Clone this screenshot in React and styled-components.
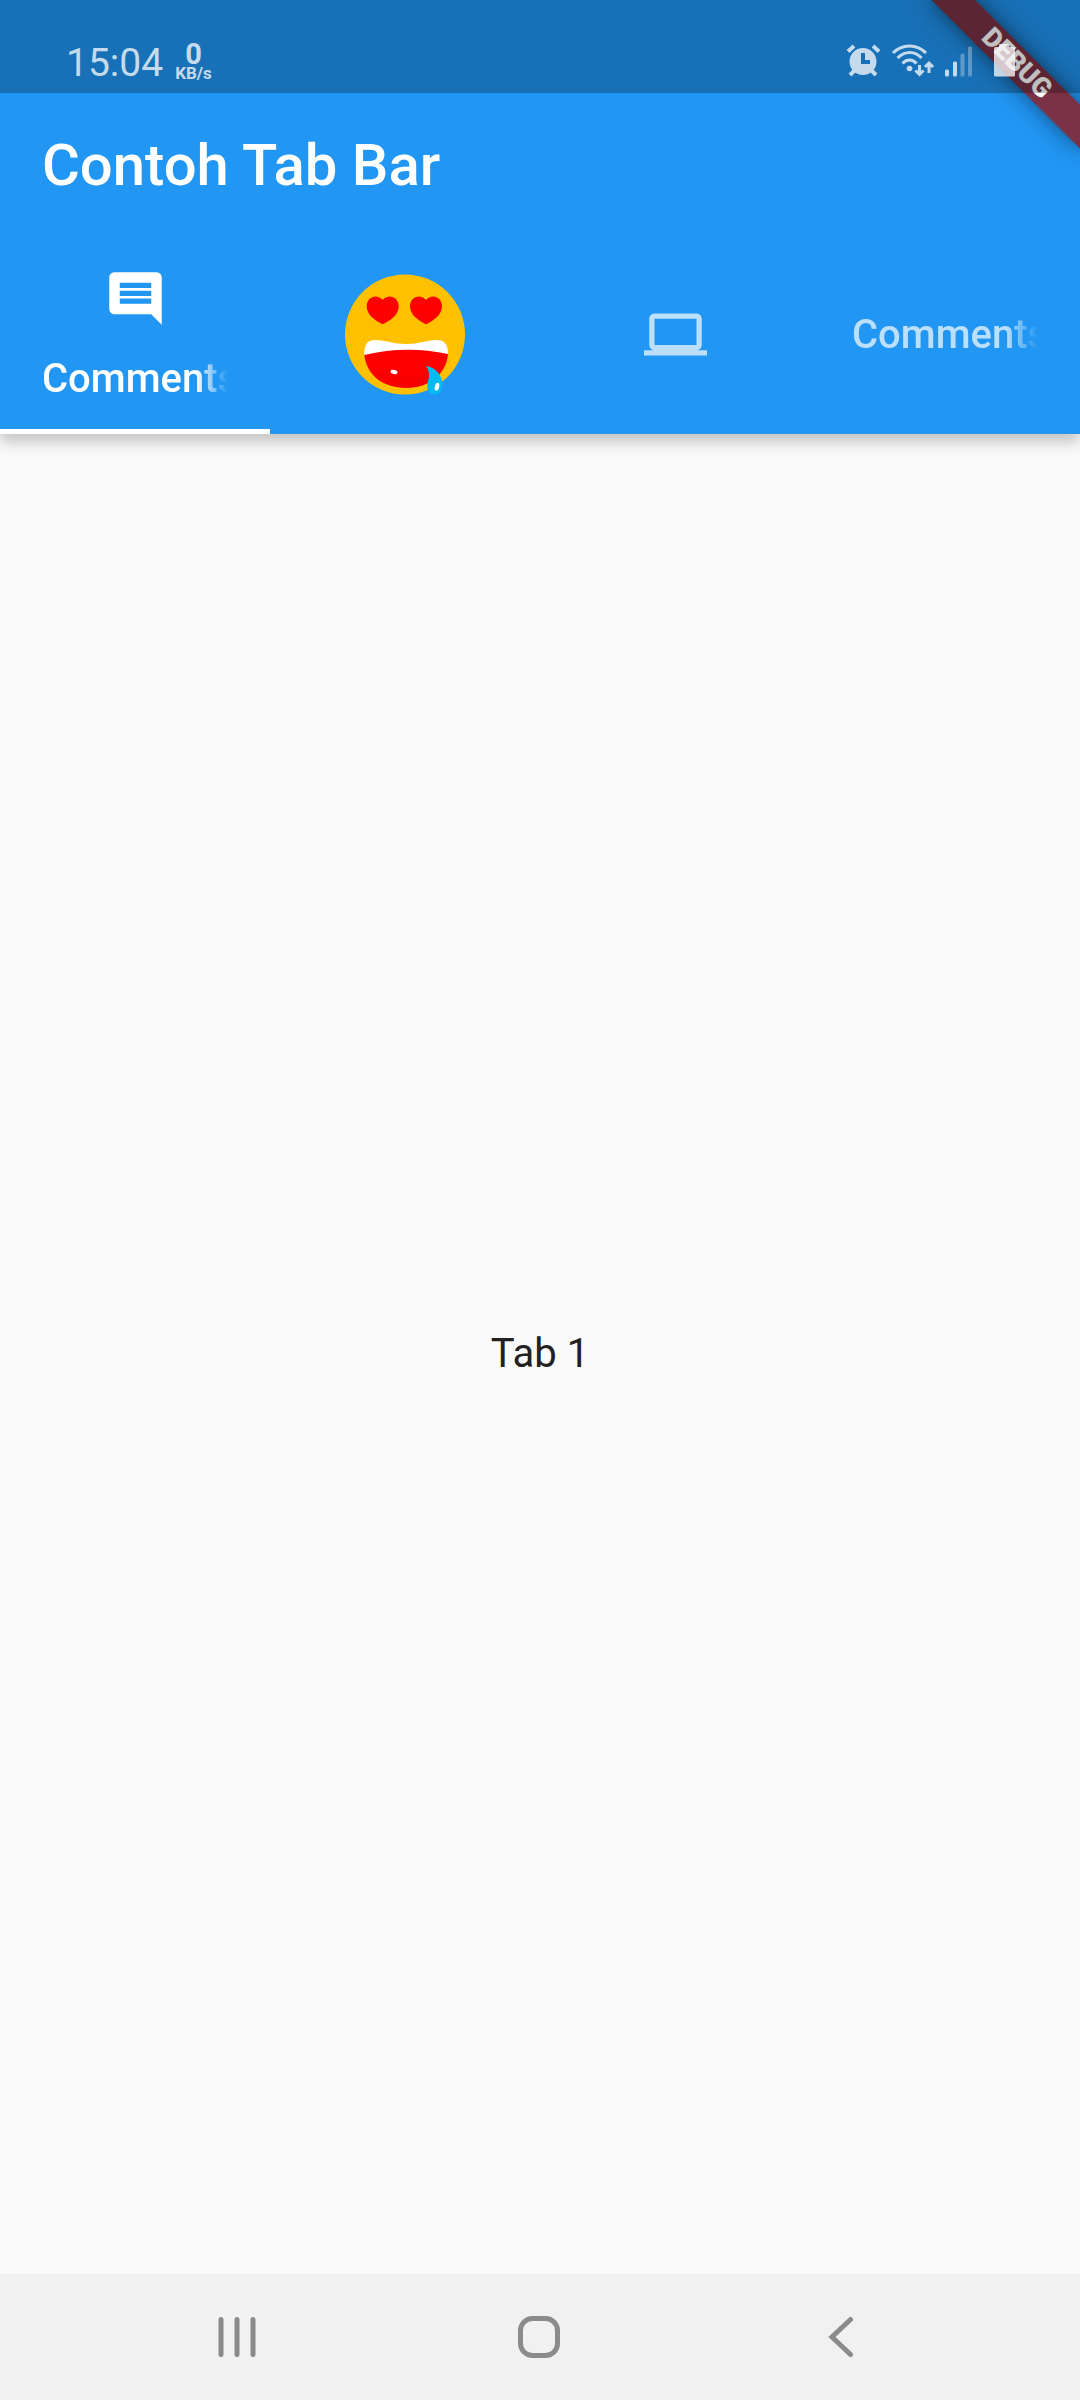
import React, { useState } from "react";
import styled, { createGlobalStyle } from "styled-components";

const GlobalStyle = createGlobalStyle`
  *, *::before, *::after { box-sizing: border-box; }
  body {
    margin: 0;
    background: #fafafa;
    font-family: Roboto, "Noto Sans", sans-serif;
  }
  button {
    margin: 0;
    padding: 0;
    border: 0;
    background: none;
    font: inherit;
    cursor: pointer;
  }
  svg { display: block; flex: none; }
`;

const Screen = styled.div`
  display: flex;
  flex-direction: column;
  min-height: 100vh;
  background: #fafafa;
`;

const AppBar = styled.header`
  position: relative;
  background: #2196f3;
  color: #fff;
  box-shadow: 0 8px 14px rgba(0, 0, 0, 0.22);
`;

const StatusBar = styled.div`
  position: relative;
  z-index: 2;
  display: flex;
  align-items: center;
  justify-content: space-between;
  height: 93px;
  padding: 31px 64px 0 66px;
  background: rgba(0, 0, 0, 0.25);
`;

const StatusGroup = styled.div`
  display: flex;
  align-items: center;
  gap: ${(p) => p.$gap}px;
  color: rgba(255, 255, 255, 0.75);
`;

const Clock = styled.span`
  padding-top: 2px;
  font-size: 39px;
  line-height: 48px;
`;

const NetSpeed = styled.span`
  display: flex;
  flex-direction: column;
  align-items: center;
  font-weight: 700;
`;

const NetValue = styled.span`
  font-size: 29px;
  line-height: 22px;
`;

const NetUnit = styled.span`
  font-size: 17px;
  line-height: 16px;
`;

const BannerClip = styled.div`
  position: absolute;
  inset: 0 0 auto auto;
  z-index: 1;
  width: 240px;
  height: 240px;
  overflow: hidden;
  pointer-events: none;
`;

const Banner = styled.div`
  position: absolute;
  top: 74px;
  left: calc(100% - 105px);
  width: 210px;
  height: 31px;
  transform: rotate(45deg);
  transform-origin: 50% -74px;
  background: linear-gradient(rgba(183, 28, 28, 0.63), rgba(183, 28, 28, 0.63)), rgba(0, 0, 0, 0.42);
  box-shadow: 0 0 22px rgba(0, 0, 0, 0.5);
  font-size: 27px;
  font-weight: 900;
  line-height: 31px;
  text-align: center;
`;

const Toolbar = styled.div`
  display: flex;
  align-items: center;
  height: 147px;
  padding: 0 42px 4px;
`;

const Title = styled.h1`
  margin: 0;
  font-size: 58px;
  font-weight: 500;
  line-height: 68px;
`;

const TabList = styled.div`
  display: grid;
  grid-template-columns: repeat(4, 1fr);
  height: 194px;
`;

const TabButton = styled.button`
  display: flex;
  flex-direction: column;
  align-items: center;
  justify-content: center;
  gap: 25px;
  min-width: 0;
  padding: 0 42px;
  border-bottom: 5px solid ${(p) => (p.$active ? "#fff" : "transparent")};
  color: ${(p) => (p.$active ? "#fff" : "rgba(255, 255, 255, 0.7)")};
`;

const TabLabel = styled.span`
  width: 100%;
  overflow: hidden;
  font-size: 40px;
  font-weight: 500;
  line-height: 48px;
  text-align: left;
  white-space: nowrap;
  mask-image: linear-gradient(to right, #000 calc(100% - 32px), transparent);
`;

const Content = styled.main`
  display: flex;
  flex: 1;
  align-items: center;
  justify-content: center;
  color: #212121;
  font-size: 40px;
  line-height: 48px;
`;

const NavBar = styled.nav`
  display: grid;
  grid-template-columns: repeat(3, 1fr);
  height: 126px;
  padding: 0 8%;
  background: #f1f1f1;
`;

const NavButton = styled.button`
  display: flex;
  align-items: center;
  justify-content: center;
  padding-right: 2px;
  color: #8b8b8b;
`;

const AlarmIcon = () => (
  <svg width="35" height="40" viewBox="0 0 35 40" aria-hidden="true">
    <g stroke="currentColor" fill="none">
      <path d="M2 9.5 8 4M33 9.5 27 4" strokeWidth="4" />
      <path d="M8 29 4 33M26 29l4 4" strokeWidth="4" />
    </g>
    <path
      fill="currentColor"
      fillRule="evenodd"
      d="M17 6a13.5 13.5 0 1 0 0 27 13.5 13.5 0 0 0 0-27zM15 11h4v7h5v4h-9z"
    />
  </svg>
);

const WifiIcon = () => (
  <svg width="44" height="40" viewBox="0 0 44 40" aria-hidden="true">
    <g fill="none" stroke="currentColor" strokeWidth="3">
      <path d="M2 11C11 1.500 26 1.500 35 11" />
      <path d="M6.500 16C13.500 8.500 24 8.500 30.500 16" />
      <path d="M11.500 21.500C15.500 16.800 21.500 16.800 25.500 21.500" />
    </g>
    <circle cx="18.500" cy="26.500" r="2.800" fill="currentColor" />
    <g fill="none" stroke="currentColor" strokeWidth="3">
      <path d="M28.500 23v9M24.500 28.500l4 4 4-4" />
      <path d="M38 31v-9M34 25l4-4 4 4" />
    </g>
  </svg>
);

const SignalIcon = () => (
  <svg width="38" height="40" viewBox="0 0 38 40" fill="currentColor" aria-hidden="true">
    <rect x="0" y="27.500" width="4" height="7" rx="1.500" />
    <rect x="8" y="19.500" width="4" height="15" rx="1.500" />
    <rect x="15.500" y="11.500" width="4" height="23" rx="1.500" opacity="0.4" />
    <rect x="23" y="4.500" width="4" height="30" rx="1.500" opacity="0.4" />
  </svg>
);

const BatteryIcon = () => (
  <svg width="23" height="40" viewBox="0 0 23 40" fill="currentColor" aria-hidden="true">
    <path d="M7 2h8a1 1 0 0 1 1 1v2h4.500a1.500 1.500 0 0 1 1.500 1.500v26.500a1.500 1.500 0 0 1-1.500 1.500h-18a1.500 1.500 0 0 1-1.500-1.500V6.500A1.500 1.500 0 0 1 2.500 5H6V3a1 1 0 0 1 1-1z" />
  </svg>
);

const CommentIcon = () => (
  <svg width="63" height="63" viewBox="0 0 24 24" fill="currentColor" aria-hidden="true">
    <path d="M21.990 4c0-1.100-.890-2-1.990-2H4c-1.100 0-2 .900-2 2v12c0 1.100.900 2 2 2h14l4 4-.010-18zM18 14H6v-2h12v2zm0-3H6V9h12v2zm0-3H6V6h12v2z" />
  </svg>
);

const LaptopIcon = () => (
  <svg width="63" height="63" viewBox="0 0 24 24" fill="currentColor" aria-hidden="true">
    <path d="M20 18c1.100 0 1.990-.900 1.990-2L22 6c0-1.100-.900-2-2-2H4c-1.100 0-2 .900-2 2v10c0 1.100.900 2 2 2H0v2h24v-2h-4zM4 6h16v10H4V6z" />
  </svg>
);

const heart = "M16 28C8 24 0 18.500 0 10 0 0 11-3 16 3.700 21-3 32 0 32 10 32 18.500 24 24 16 28z";

const EmojiIcon = () => (
  <svg width="120" height="121" viewBox="0 0 120 121" aria-hidden="true">
    <circle cx="60" cy="60.500" r="60" fill="#ffc000" />
    <path d={heart} transform="translate(21.700 22.300)" fill="#f00" />
    <path d={heart} transform="translate(65 22.300)" fill="#f00" />
    <path d="M19.300 81C19 71 22 66 30 66c11 0 18 4 31 4s21-4 31-4c8 0 11 5 11 14L61 86z" fill="#fff" />
    <path d="M19.300 81Q61 71 103 80C101 101 84 113.700 61 113.700S22 102 19.300 81z" fill="#f00" />
    <path d="M25 94Q60 112 97 94C91 107 78 113.700 61 113.700 44 113.700 31 106 25 94z" fill="#f60000" />
    <ellipse cx="49" cy="98" rx="3.500" ry="2" transform="rotate(12 49 98)" fill="#fff" />
    <path d="M81 92C91 93 98 103 97.300 110 97 117 94 120.500 89.500 120.500 84 120.500 81.500 116 82.500 110 83.500 105 86 99 81 92z" fill="#00bcf2" />
    <ellipse cx="92" cy="112.700" rx="2.200" ry="4" transform="rotate(15 92 112.700)" fill="#fff" />
  </svg>
);

const RecentsIcon = () => (
  <svg width="42" height="42" viewBox="0 0 42 42" fill="none" stroke="currentColor" strokeWidth="5" strokeLinecap="round" aria-hidden="true">
    <path d="M5 3.500v35M21 3.500v35M37 3.500v35" />
  </svg>
);

const HomeIcon = () => (
  <svg width="42" height="42" viewBox="0 0 42 42" fill="none" stroke="currentColor" strokeWidth="5" aria-hidden="true">
    <rect x="2.500" y="2.500" width="37" height="37" rx="12" />
  </svg>
);

const BackIcon = () => (
  <svg width="42" height="42" viewBox="0 0 42 42" fill="none" stroke="currentColor" strokeWidth="5" strokeLinecap="round" aria-hidden="true">
    <path d="M30.500 3.500 12 21l18.500 17.500" />
  </svg>
);

const tabs = [
  { name: "Comments", icon: CommentIcon, label: "Comments" },
  { name: "Emoji", icon: EmojiIcon },
  { name: "Computer", icon: LaptopIcon },
  { name: "Comments", label: "Comments" },
];

const navItems = [
  { name: "Recent apps", icon: RecentsIcon },
  { name: "Home", icon: HomeIcon },
  { name: "Back", icon: BackIcon },
];

export default function App() {
  const [active, setActive] = useState(0);

  return (
    <Screen>
      <GlobalStyle />
      <AppBar>
        <StatusBar>
          <StatusGroup $gap={12}>
            <Clock>15:04</Clock>
            <NetSpeed>
              <NetValue>0</NetValue>
              <NetUnit>KB/s</NetUnit>
            </NetSpeed>
          </StatusGroup>
          <StatusGroup $gap={10}>
            <AlarmIcon />
            <WifiIcon />
            <SignalIcon />
            <BatteryIcon />
          </StatusGroup>
        </StatusBar>
        <Toolbar>
          <Title>Contoh Tab Bar</Title>
        </Toolbar>
        <TabList role="tablist">
          {tabs.map(({ name, icon: Icon, label }, i) => (
            <TabButton
              key={i}
              id={`tab-${i}`}
              type="button"
              role="tab"
              aria-label={name}
              aria-selected={i === active}
              aria-controls="tab-panel"
              $active={i === active}
              onClick={() => setActive(i)}
            >
              {Icon && <Icon />}
              {label && <TabLabel>{label}</TabLabel>}
            </TabButton>
          ))}
        </TabList>
        <BannerClip>
          <Banner>DEBUG</Banner>
        </BannerClip>
      </AppBar>
      <Content id="tab-panel" role="tabpanel" aria-labelledby={`tab-${active}`}>
        Tab {active + 1}
      </Content>
      <NavBar aria-label="System">
        {navItems.map(({ name, icon: Icon }) => (
          <NavButton key={name} type="button" aria-label={name}>
            <Icon />
          </NavButton>
        ))}
      </NavBar>
    </Screen>
  );
}
